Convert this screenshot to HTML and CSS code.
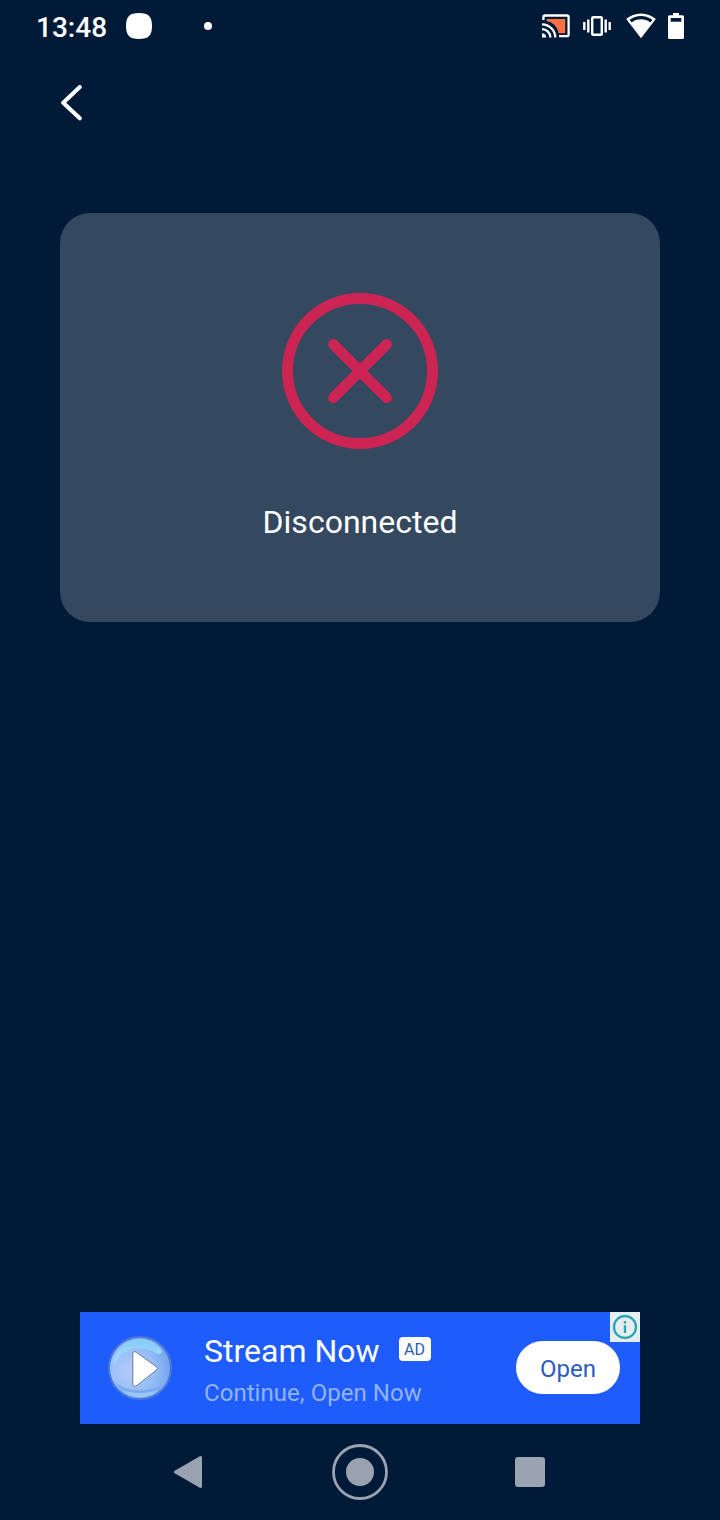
FILE: index.html
```html
<!DOCTYPE html>
<html lang="en">
<head>
    <meta charset="UTF-8">
    <meta name="viewport" content="width=device-width, initial-scale=1.0">
    <title>Connection</title>
    <link rel="stylesheet" href="styles.css">
</head>
<body>
    <div class="screen">
        <div class="status-bar">
            <span class="clock">13:48</span>
            <svg class="app-icon" width="26" height="26" viewBox="0 0 26 26">
                <path d="M13 0C22.500 0 26 3.500 26 13S22.500 26 13 26 0 22.500 0 13 3.500 0 13 0z" fill="#fff"/>
            </svg>
            <span class="dot"></span>
            <div class="status-icons">
                <svg width="28" height="24" viewBox="0 0 28 24" fill="none" stroke="#fff" stroke-width="2.300">
                    <path d="M4.700 7.200V5H23.200V19.200H16.500C15.500 12.500 11 8 4.700 7.200z" fill="#ff7043" stroke="none"/>
                    <path d="M1.400 6V3.200Q1.400 1.500 3.100 1.500H24.900Q26.600 1.500 26.600 3.200V20.400Q26.600 22.100 24.900 22.100H17"/>
                    <path d="M0 10.300A13.300 13.300 0 0 1 13.300 23.600M0 15.200A8.400 8.400 0 0 1 8.400 23.600"/>
                    <path d="M0 19.300A4.300 4.300 0 0 1 4.300 23.600H0z" fill="#fff" stroke="none"/>
                </svg>
                <svg class="vibrate" width="28" height="20" viewBox="0 0 28 20" fill="none" stroke="#fff" stroke-width="2.400">
                    <rect x="9.200" y="1.300" width="9.600" height="17.400" rx="1"/>
                    <path d="M5.300 3.500V16.500M22.700 3.500V16.500M1.300 6V14M26.700 6V14"/>
                </svg>
                <svg class="wifi" width="30" height="26" viewBox="0 0 30 26">
                    <path d="M15 .5C9.300 .5 4.200 2.700 .2 6.100L15 25.200 29.800 6.100C25.800 2.700 20.700 .5 15 .5z" fill="#fff"/>
                    <path d="M3.600 6.700C6.800 4.400 10.700 3 15 3S23.200 4.400 26.400 6.700L24.300 9.400C21.700 7.400 18.500 6.200 15 6.200S8.300 7.400 5.700 9.400z" fill="#001a38"/>
                </svg>
                <svg class="battery" width="16" height="26" viewBox="0 0 16 26">
                    <path d="M5 0H11V2.300H14.500Q16 2.300 16 3.800V24.500Q16 26 14.500 26H1.500Q0 26 0 24.500V3.800Q0 2.300 1.500 2.300H5z" fill="#fff"/>
                    <path d="M2.700 5H13.300V8.700H2.700z" fill="#001a38"/>
                </svg>
            </div>
        </div>

        <div class="toolbar">
            <svg class="back-icon" width="22" height="36" viewBox="0 0 22 36" fill="none" stroke="#fff" stroke-width="4" stroke-linecap="round" stroke-linejoin="round">
                <path d="M19.800 2L3.200 17.700 19.800 33.300"/>
            </svg>
        </div>

        <div class="status-card">
            <svg width="156" height="156" viewBox="0 0 156 156" fill="none" stroke="#cc2453" stroke-width="11">
                <circle cx="78" cy="78" r="72.500"/>
                <path d="M51.300 51.300L104.700 104.700M104.700 51.300L51.300 104.700" stroke-width="10.600" stroke-linecap="round"/>
            </svg>
            <div class="status-text">Disconnected</div>
        </div>

        <div class="ad-banner">
            <svg class="ad-icon" width="64" height="64" viewBox="0 0 64 64">
                <defs>
                    <radialGradient id="orb" cx=".35" cy=".55" r=".65">
                        <stop offset="0" stop-color="#b4cdfa"/>
                        <stop offset=".6" stop-color="#95bdf6"/>
                        <stop offset="1" stop-color="#72a5ee"/>
                    </radialGradient>
                    <linearGradient id="gloss" x1="0" y1="0" x2="0" y2="1">
                        <stop offset="0" stop-color="#86cbf8"/>
                        <stop offset="1" stop-color="#a6dcfb"/>
                    </linearGradient>
                </defs>
                <circle cx="32" cy="32" r="31" fill="url(#orb)" stroke="#4b78d4" stroke-width="2"/>
                <path d="M7 46C18 57 46 57 57 46C52 56 43 61 32 61S12 56 7 46z" fill="#7cabef"/>
                <path d="M14 54C24 58 40 58 50 54C45 59 39 61 32 61S19 59 14 54z" fill="#9ac6f7"/>
                <path d="M5 29C7 13 18 3 32 3C43 3 50 8 54 15C54 19 50 19 46 16C34 10 18 13 11 21C8 25 6 28 5 29z" fill="url(#gloss)"/>
                <path d="M24.800 18.500Q24.800 13.800 28.700 16.600L48.300 30.600Q50.500 32.400 48.300 34.200L29.500 49Q24.800 52 24.800 47.500z" fill="#fff" stroke="#6d7890" stroke-width="1"/>
            </svg>
            <div class="ad-body">
                <div class="ad-heading">
                    <span class="ad-title">Stream Now</span>
                    <span class="ad-badge">AD</span>
                </div>
                <div class="ad-subtitle">Continue, Open Now</div>
            </div>
            <button class="open-btn">Open</button>
            <div class="ad-info">
                <svg width="30" height="30" viewBox="0 0 30 30">
                    <circle cx="15" cy="15" r="11" fill="none" stroke="#2ba6b3" stroke-width="2.300"/>
                    <path d="M13.800 9H16.200V11.400H13.800zM13.800 13.300H16.200V21H13.800z" fill="#2ba6b3"/>
                </svg>
            </div>
        </div>

        <div class="nav-bar">
            <svg width="30" height="34" viewBox="0 0 30 34">
                <path d="M2.500 17L27.500 2.500V31.500z" fill="#99a3b1" stroke="#99a3b1" stroke-width="3" stroke-linejoin="round"/>
            </svg>
            <svg width="56" height="56" viewBox="0 0 56 56">
                <circle cx="28" cy="28" r="26.500" fill="none" stroke="#99a3b1" stroke-width="2.800"/>
                <circle cx="28" cy="28" r="14" fill="#99a3b1"/>
            </svg>
            <span class="nav-recent"></span>
        </div>
    </div>
</body>
</html>
```
FILE: styles.css
```css
* {
    margin: 0;
    padding: 0;
    box-sizing: border-box;
}
body {
    font-family: Roboto, sans-serif;
    background: #001a38;
    color: #fff;
}
svg {
    display: block;
    flex-shrink: 0;
}
.screen {
    width: 720px;
    height: 1520px;
    display: flex;
    flex-direction: column;
    overflow: hidden;
}
.status-bar {
    height: 52px;
    padding: 0 36px;
    display: flex;
    align-items: center;
}
.clock {
    width: 90px;
    font-size: 28px;
    font-weight: 500;
    line-height: 32px;
    padding-top: 3px;
}
.dot {
    width: 8px;
    height: 8px;
    margin-left: 52px;
    border-radius: 50%;
    background: #fff;
}
.status-icons {
    display: flex;
    align-items: center;
    margin-left: auto;
}
.vibrate {
    margin-left: 13px;
}
.wifi {
    margin-left: 15px;
}
.battery {
    margin-left: 12px;
}
.toolbar {
    height: 101px;
    padding: 0 60px;
    display: flex;
    align-items: center;
}
.status-card {
    height: 409px;
    margin: 60px 60px 0;
    padding-top: 80px;
    border-radius: 30px;
    background: #34485f;
    display: flex;
    flex-direction: column;
    align-items: center;
}
.status-text {
    margin-top: 54px;
    font-size: 32px;
    line-height: 38px;
}
.ad-banner {
    position: relative;
    width: 560px;
    height: 112px;
    margin: auto auto 0;
    padding: 0 20px 0 28px;
    background: #1e5cfb;
    display: flex;
    align-items: center;
}
.ad-body {
    margin-left: 32px;
    padding-top: 8px;
}
.ad-heading {
    display: flex;
    align-items: center;
    gap: 19px;
}
.ad-title {
    font-size: 32px;
    line-height: 40px;
}
.ad-badge {
    width: 32px;
    height: 24px;
    margin-bottom: 4px;
    border-radius: 4px;
    background: #fff;
    color: #2b5cbd;
    font-size: 16px;
    line-height: 25px;
    text-align: center;
}
.ad-subtitle {
    margin-top: 2px;
    color: #92b3fb;
    font-size: 24px;
    line-height: 40px;
    letter-spacing: 0.05px;
}
.open-btn {
    width: 104px;
    height: 53px;
    margin: 0 0 2px auto;
    padding-top: 3px;
    border: none;
    border-radius: 27px;
    background: #fff;
    color: #2b5cbd;
    font-family: inherit;
    font-size: 24px;
}
.ad-info {
    position: absolute;
    top: 0;
    right: 0;
    background: #e6edf0;
}
.nav-bar {
    height: 96px;
    padding: 0 175px 0 173px;
    display: flex;
    align-items: center;
    gap: 129px;
}
.nav-recent {
    width: 30px;
    height: 30px;
    margin-left: -2px;
    border-radius: 3px;
    background: #99a3b1;
}
```
